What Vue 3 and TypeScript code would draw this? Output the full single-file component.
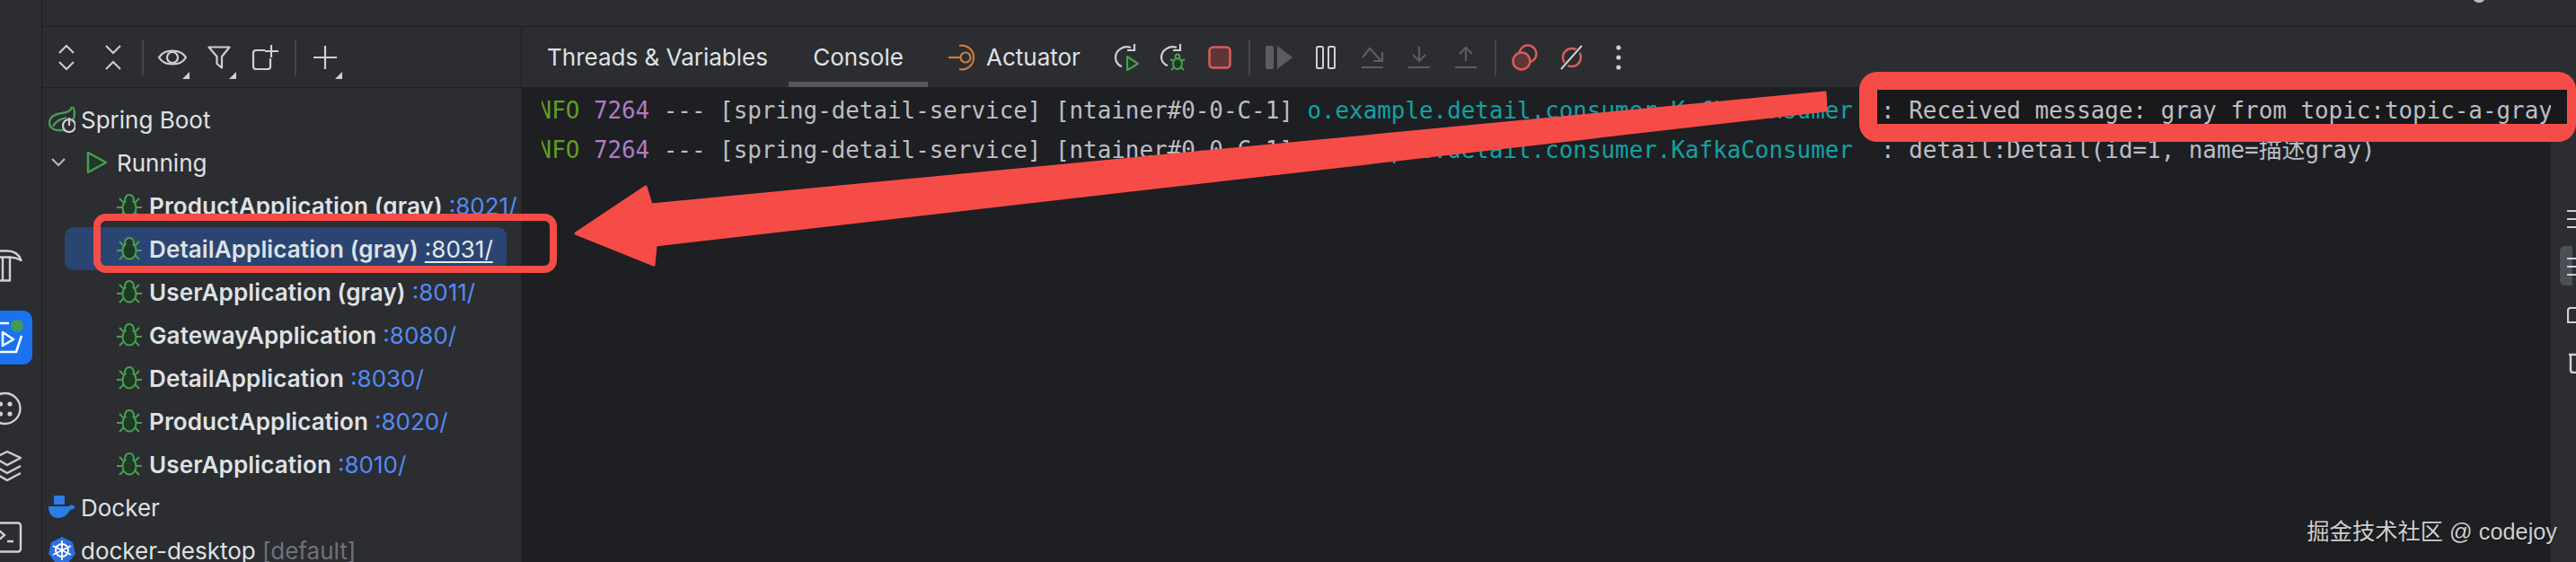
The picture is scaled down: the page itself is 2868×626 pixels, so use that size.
<script setup lang="ts">
interface AppRow { name: string; port: string; cls?: string }
const apps: AppRow[] = [
  { name: 'ProductApplication (gray)', port: ':8021/' },
  { name: 'DetailApplication (gray)', port: ':8031/', cls: 'selected' },
  { name: 'UserApplication (gray)', port: ':8011/' },
  { name: 'GatewayApplication', port: ':8080/' },
  { name: 'DetailApplication', port: ':8030/' },
  { name: 'ProductApplication', port: ':8020/' },
  { name: 'UserApplication', port: ':8010/' }
]
const thread = ' --- [spring-detail-service] [ntainer#0-0-C-1] '
const logs = [
  '  : Received message: gray from topic:topic-a-gray',
  '  : detail:Detail(id=1, name=描述gray)'
]
</script>

<template>
  <div class="ide">
    <aside class="strip">
      <svg class="s-hammer" width="26" height="36" viewBox="0 0 26 36" fill="none" stroke="#ced0d6" stroke-width="2.4" stroke-linejoin="round">
        <path d="M-2 1.5H8C15 1.5 21 5 23.5 12C19 9.5 15 8.5 11 8.5V34.5H-2" />
        <path d="M-2 8.5H11M3 8.5V34.5" />
      </svg>
      <div class="s-run">
        <svg width="36" height="60" viewBox="0 0 36 60" fill="none" stroke="#fff" stroke-width="2.6" stroke-linejoin="round">
          <path d="M3 24L15 32L3 39Z" />
          <path d="M-2 14H10M24 28L18 46H-2" />
          <circle cx="19" cy="17" r="8" fill="#3d9c5a" stroke="#1a72f0" stroke-width="2" />
        </svg>
      </div>
      <svg class="s-plug" width="26" height="38" viewBox="0 0 26 38" fill="#ced0d6">
        <circle cx="5.5" cy="19" r="17" fill="none" stroke="#ced0d6" stroke-width="2.4" />
        <circle cx="0.5" cy="14" r="2.6" /><circle cx="11" cy="14" r="2.6" />
        <circle cx="0.5" cy="25" r="2.6" /><circle cx="11" cy="25" r="2.6" />
      </svg>
      <svg class="s-layers" width="26" height="36" viewBox="0 0 26 36" fill="none" stroke="#ced0d6" stroke-width="2.4" stroke-linejoin="round">
        <path d="M-6 9L8 2L23 9L8 17Z" />
        <path d="M-6 18L8 26L23 18M-6 26L8 34L23 26" />
      </svg>
      <svg class="s-term" width="26" height="28" viewBox="0 0 26 28" fill="none" stroke="#ced0d6" stroke-width="2.4">
        <rect x="-12" y="1.5" width="35" height="32" rx="3" />
        <path d="M-2 9L5 15L-2 21M8 22H15" />
      </svg>
    </aside>

    <div class="body">
      <div class="topbar"></div>
      <div class="main">
        <section class="tree-panel">
          <div class="toolbar">
            <button class="btn">
              <svg width="20" height="28" viewBox="0 0 20 28" fill="none" stroke="#ced0d6" stroke-width="2"><path d="M2 9L10 1L18 9M2 19L10 27L18 19" /></svg>
            </button>
            <button class="btn">
              <svg width="20" height="28" viewBox="0 0 20 28" fill="none" stroke="#ced0d6" stroke-width="2"><path d="M2 1L10 9L18 1M2 27L10 19L18 27" /></svg>
            </button>
            <span class="sep"></span>
            <button class="btn">
              <svg width="32" height="24" viewBox="0 0 32 24" fill="none" stroke="#ced0d6" stroke-width="2.2"><path d="M1 12C7 2 25 2 31 12C25 22 7 22 1 12Z" /><circle cx="16" cy="12" r="6" /></svg>
              <i class="tri"></i>
            </button>
            <button class="btn">
              <svg width="26" height="26" viewBox="0 0 26 26" fill="none" stroke="#ced0d6" stroke-width="2.2" stroke-linejoin="round"><path d="M1.5 1.5H24.5L16 12V24.5L10.5 20V12Z" /></svg>
              <i class="tri"></i>
            </button>
            <button class="btn">
              <svg width="32" height="30" viewBox="0 0 32 30" fill="none" stroke="#ced0d6" stroke-width="2.2"><path d="M15 7H5Q2 7 2 10V25Q2 28 5 28H18Q21 28 21 25V16" /><path d="M22 1V15M15 8H30" /></svg>
            </button>
            <span class="sep"></span>
            <button class="btn">
              <svg width="28" height="28" viewBox="0 0 28 28" fill="none" stroke="#ced0d6" stroke-width="2.2"><path d="M14 1V27M1 14H27" /></svg>
              <i class="tri"></i>
            </button>
          </div>

          <div class="tree">
            <div class="row lvl0">
              <svg class="ico30" width="30" height="30" viewBox="0 0 30 30" fill="none">
                <path d="M26 1C25 6 21 7 15 8C7 9 1 12 1 19C1 23 4 26 9 27L20 27" stroke="#499c54" stroke-width="2.3" stroke-linejoin="round" />
                <path d="M27 1C30 6 29 12 27 16M5 23C8 16 14 15 20 13" stroke="#499c54" stroke-width="2.3" />
                <circle cx="23" cy="22" r="7" fill="#2b2d30" stroke="#ced0d6" stroke-width="2.2" />
                <path d="M23 13V22" stroke="#ced0d6" stroke-width="2.2" />
              </svg>
              <span>Spring Boot</span>
            </div>
            <div class="row lvl1">
              <svg class="chev" width="16" height="10" viewBox="0 0 16 10" fill="none" stroke="#b4b8bf" stroke-width="2.2"><path d="M1 1L8 8L15 1" /></svg>
              <svg class="play" width="24" height="26" viewBox="0 0 24 26" fill="#1f3a26" stroke="#499c54" stroke-width="2.5" stroke-linejoin="round"><path d="M2 2L22 13L2 24Z" /></svg>
              <span>Running</span>
            </div>
            <div v-for="a in apps" :key="a.name" class="row app" :class="a.cls">
              <svg class="bug" width="28" height="26" viewBox="0 0 28 26" fill="none" stroke="#499c54" stroke-width="2">
                <ellipse cx="14" cy="15.5" rx="7.5" ry="9" fill="#1d3a22" />
                <path d="M9 8C9 3 11 1 14 1C17 1 19 3 19 8" fill="#1d3a22" />
                <path d="M3 5L8 10M25 5L20 10M0 15H7M28 15H21M3 25L8 20M25 25L20 20" />
              </svg>
              <b>{{ a.name }}</b>
              <span class="port">{{ a.port }}</span>
            </div>
            <div class="row lvl0">
              <svg class="ico30" width="30" height="26" viewBox="0 0 30 26" fill="#2b7de9">
                <rect x="6" y="0" width="12" height="10" rx="1" />
                <path d="M0 12H23C24 10 27 10 30 13C28 15 26 16 24 16C21 22 16 25 10 25C4 25 0 20 0 12Z" />
              </svg>
              <span>Docker</span>
            </div>
            <div class="row lvl0">
              <svg class="ico30" width="30" height="30" viewBox="0 0 30 30">
                <path d="M15 0L27 6L30 19L22 29H8L0 19L3 6Z" fill="#2b6fe0" />
                <circle cx="15" cy="15" r="7" fill="none" stroke="#fff" stroke-width="2" />
                <path d="M15 4V26M5 10L25 20M25 10L5 20" stroke="#fff" stroke-width="1.8" />
              </svg>
              <span>docker-desktop <em>[default]</em></span>
            </div>
          </div>
        </section>

        <section class="run-panel">
          <div class="toolbar">
            <div class="tab t1">Threads &amp; Variables</div>
            <div class="tab t2">Console</div>
            <div class="tab t3">
              <svg width="30" height="30" viewBox="0 0 30 30" fill="none" stroke="#c77d45" stroke-width="2.2">
                <path d="M0 15H13" /><circle cx="19" cy="15" r="5.5" />
                <path d="M12 2C20 0 28 6 28 15C28 24 20 30 12 28" />
              </svg>
              <span>Actuator</span>
            </div>
            <button class="btn">
              <svg width="30" height="30" viewBox="0 0 30 30" fill="none">
                <path d="M20 4C12 1 3 7 3 15C3 20 6 24 10 25" stroke="#ced0d6" stroke-width="2.2" />
                <path d="M24 0V7H16" stroke="#ced0d6" stroke-width="2.2" />
                <path d="M16 14L28 22L16 29Z" fill="#1f3a26" stroke="#499c54" stroke-width="2.2" stroke-linejoin="round" />
              </svg>
            </button>
            <button class="btn">
              <svg width="32" height="32" viewBox="0 0 32 32" fill="none">
                <path d="M20 5C12 2 3 8 3 16C3 20 6 24 10 25" stroke="#ced0d6" stroke-width="2.2" />
                <path d="M24 1V8H16" stroke="#ced0d6" stroke-width="2.2" />
                <ellipse cx="21" cy="23" rx="5" ry="6" fill="#1f3a26" stroke="#499c54" stroke-width="2" />
                <circle cx="21" cy="15" r="2.5" stroke="#499c54" stroke-width="2" />
                <path d="M13 18L17 20M29 18L25 20M14 30L17 27M28 30L25 27" stroke="#499c54" stroke-width="2" />
              </svg>
            </button>
            <button class="btn">
              <svg width="26" height="26" viewBox="0 0 26 26"><rect x="1.5" y="1.5" width="23" height="23" rx="4" fill="#5e3638" stroke="#db5c5c" stroke-width="2.5" /></svg>
            </button>
            <span class="sep"></span>
            <button class="btn">
              <svg width="30" height="28" viewBox="0 0 30 28" fill="#5b5d61"><rect x="0" y="1" width="9" height="26" rx="2" /><path d="M13 1L30 14L13 27Z" /></svg>
            </button>
            <button class="btn">
              <svg width="22" height="26" viewBox="0 0 22 26" fill="none" stroke="#ced0d6" stroke-width="2"><rect x="1" y="1" width="7" height="24" rx="1.5" /><rect x="14" y="1" width="7" height="24" rx="1.5" /></svg>
            </button>
            <button class="btn">
              <svg width="26" height="26" viewBox="0 0 26 26" fill="none" stroke="#5b5d61" stroke-width="2.2"><path d="M2 13L10 3L22 16M24 7V17H14M1 24H25" /></svg>
            </button>
            <button class="btn">
              <svg width="26" height="26" viewBox="0 0 26 26" fill="none" stroke="#5b5d61" stroke-width="2.2"><path d="M13 1V17M6 10L13 17L20 10M1 24H25" /></svg>
            </button>
            <button class="btn">
              <svg width="26" height="26" viewBox="0 0 26 26" fill="none" stroke="#5b5d61" stroke-width="2.2"><path d="M13 17V2M6 9L13 2L20 9M1 24H25" /></svg>
            </button>
            <span class="sep"></span>
            <button class="btn">
              <svg width="30" height="30" viewBox="0 0 30 30" fill="none" stroke="#db5c5c" stroke-width="2.4">
                <circle cx="18" cy="11" r="9.5" />
                <circle cx="11" cy="19" r="9.5" fill="#5e3638" />
              </svg>
            </button>
            <button class="btn">
              <svg width="28" height="28" viewBox="0 0 28 28" fill="none">
                <circle cx="14" cy="14" r="10" stroke="#db5c5c" stroke-width="2.4" />
                <path d="M2 28L26 1" stroke="#2b2d30" stroke-width="5" />
                <path d="M2 27L25 1" stroke="#ced0d6" stroke-width="2" />
              </svg>
            </button>
            <button class="btn">
              <svg width="6" height="28" viewBox="0 0 6 28" fill="#ced0d6"><circle cx="3" cy="3" r="2.6" /><circle cx="3" cy="14" r="2.6" /><circle cx="3" cy="25" r="2.6" /></svg>
            </button>
          </div>

          <div class="content">
            <div class="console">
              <div class="hl-bg"></div>
              <div class="log">
                <div v-for="(msg, i) in logs" :key="i" class="line"><span class="lv">INFO</span>{{ ' ' }}<span class="pid">7264</span>{{ thread }}<span class="cls">o.example.detail.consumer.KafkaConsumer</span>{{ msg }}</div>
              </div>
            </div>
            <div class="rstrip">
              <svg class="r-wrap" width="10" height="22" viewBox="0 0 10 22" stroke="#ced0d6" stroke-width="2.2"><path d="M0 2H10M0 11H10M0 20H10" /></svg>
              <div class="r-active">
                <svg width="10" height="22" viewBox="0 0 10 22" stroke="#ced0d6" stroke-width="2.2"><path d="M0 2H10M0 11H10M0 20H10" /></svg>
              </div>
              <svg class="r-print" width="10" height="18" viewBox="0 0 10 18" fill="none" stroke="#ced0d6" stroke-width="2.2"><path d="M10 1H4Q1 1 1 4V17H10" /></svg>
              <svg class="r-trash" width="8" height="24" viewBox="0 0 8 24" fill="none" stroke="#ced0d6" stroke-width="2.4"><path d="M0 3H8M2 3V20Q2 23 5 23H8" /></svg>
            </div>
          </div>
        </section>
      </div>
    </div>

    <div class="mark-left"></div>
    <div class="mark-right"></div>
    <svg class="arrow" width="2868" height="626" viewBox="0 0 2868 626">
      <path d="M2032 103L2033 123L730 273L728 295L641 260L719 208L725 228Z" fill="#f64c47" stroke="#f64c47" stroke-width="3" stroke-linejoin="round" />
    </svg>
    <div class="watermark">掘金技术社区 @ codejoy</div>
    <i class="top-dot"></i>
  </div>
</template>

<style>
html, body { margin: 0; background: #1e1f22; }
</style>

<style scoped>
.ide {
  position: relative;
  display: flex;
  width: 2868px;
  height: 626px;
  overflow: hidden;
  background: #2b2d30;
  color: #dfe1e5;
  font-family: Inter, "Noto Sans CJK SC", sans-serif;
  font-size: 26px;
}
.strip {
  flex: 0 0 47px;
  display: flex;
  flex-direction: column;
  align-items: flex-start;
  padding-top: 278px;
  box-sizing: border-box;
  border-right: 1px solid #1e1f22;
}
.strip svg { display: block; flex: none; overflow: visible; }
.s-run { width: 36px; height: 60px; margin-top: 32px; background: #1a72f0; border-radius: 0 10px 10px 0; overflow: hidden; flex: none; }
.s-run svg { overflow: hidden; }
.s-plug { margin-top: 30px; }
.s-layers { margin-top: 27px; }
.s-term { margin-top: 44px; }
.body { flex: 1; display: flex; flex-direction: column; min-width: 0; }
.topbar { flex: 0 0 30px; box-sizing: border-box; border-bottom: 1px solid #1e1f22; }
.main { flex: 1; display: flex; min-height: 0; }
.tree-panel { flex: 0 0 534px; display: flex; flex-direction: column; box-sizing: border-box; border-right: 1px solid #1e1f22; }
.toolbar { flex: 0 0 68px; display: flex; align-items: center; box-sizing: border-box; height: 68px; border-bottom: 1px solid #1e1f22; }
.tree-panel .toolbar { padding-left: 1px; }
.btn {
  position: relative;
  flex: 0 0 52px;
  height: 52px;
  padding: 0;
  border: 0;
  background: none;
  display: flex;
  align-items: center;
  justify-content: center;
}
.btn svg { display: block; overflow: visible; }
.tri {
  position: absolute;
  right: 7px;
  bottom: 2px;
  width: 0;
  height: 0;
  border-left: 8px solid transparent;
  border-bottom: 8px solid #ced0d6;
}
.sep { flex: 0 0 14px; height: 40px; position: relative; }
.sep::before { content: ""; position: absolute; left: 6px; top: 0; bottom: 0; width: 2px; background: #43454a; }
.tree { flex: 1; padding-top: 11px; overflow: hidden; }
.row {
  display: flex;
  align-items: center;
  height: 48px;
  white-space: pre;
}
.ico30 { flex: none; margin-right: 6px; }
.lvl0 { padding-left: 7px; }
.lvl1 { padding-left: 10px; }
.chev { flex: none; margin-right: 23px; }
.play { flex: none; margin-right: 10px; }
.app { padding-left: 83px; }
.bug { flex: none; margin-right: 8px; overflow: visible; }
.app b { font-weight: 600; letter-spacing: 0.12px; }
.port { margin-left: 7px; color: #548af7; }
.selected {
  margin: 0 16px 0 25px;
  padding-left: 58px;
  background: #2a4572;
  border-radius: 10px;
}
.selected .port { color: #e6e8ec; text-decoration: underline; text-underline-offset: 4px; }
em { font-style: normal; color: #6f737a; }

.run-panel { flex: 1; min-width: 0; display: flex; flex-direction: column; }
.tab {
  flex: none;
  height: 67px;
  display: flex;
  align-items: center;
  box-sizing: border-box;
}
.t1 { width: 297px; padding-left: 28px; }
.t2 { width: 155px; justify-content: center; box-shadow: inset 0 -6px 0 #55575c; }
.t3 { width: 195px; padding-left: 23px; gap: 12px; }
.content { flex: 1; display: flex; min-height: 0; }
.console {
  flex: 1;
  min-width: 0;
  background: #1e1f22;
  padding: 3px 0 0 22px;
  font-family: "DejaVu Sans Mono", "Noto Sans CJK SC", monospace;
  font-size: 25.88px;
  color: #bcbec4;
}
.log { overflow: hidden; }
.hl-bg { position: absolute; left: 2090px; top: 100px; width: 768px; height: 38px; background: #19191c; }
.line { position: relative; height: 44px; line-height: 44px; margin-left: -20px; white-space: pre; }
.lv { color: #5f9e23; }
.pid { color: #b07cc6; }
.cls { color: #10a3a3; }
.rstrip { flex: 0 0 24px; display: flex; flex-direction: column; align-items: flex-start; padding: 135px 0 0 18px; box-sizing: border-box; }
.rstrip svg { display: block; flex: none; }
.r-active {
  flex: none;
  width: 14px;
  height: 44px;
  margin: 19px 0 0 -8px;
  padding: 12px 0 0 8px;
  box-sizing: border-box;
  background: #4b4e54;
  border-radius: 6px 0 0 6px;
}
.r-print { margin-top: 24px; }
.r-trash { margin: 32px 0 0 2px; }

.mark-left {
  position: absolute;
  left: 104px;
  top: 238px;
  width: 516px;
  height: 66px;
  box-sizing: border-box;
  border: 8px solid #f64c47;
  border-radius: 14px;
}
.mark-right {
  position: absolute;
  left: 2070px;
  top: 80px;
  width: 798px;
  height: 78px;
  box-sizing: border-box;
  border: 20px solid #f64c47;
  border-right-width: 10px;
  border-radius: 20px;
}
.arrow { position: absolute; left: 0; top: 0; }
.watermark {
  position: absolute;
  right: 21px;
  bottom: 18px;
  color: #cfcfcf;
  font-family: "Liberation Sans", "Noto Sans CJK SC", sans-serif;
  font-size: 25.3px;
  line-height: 32px;
  text-shadow: 1px 1px 1px rgba(0, 0, 0, 0.4);
  white-space: nowrap;
}
.top-dot { position: absolute; left: 2754px; top: -5px; width: 12px; height: 8px; border-radius: 50%; background: #b9bbc0; }
</style>
